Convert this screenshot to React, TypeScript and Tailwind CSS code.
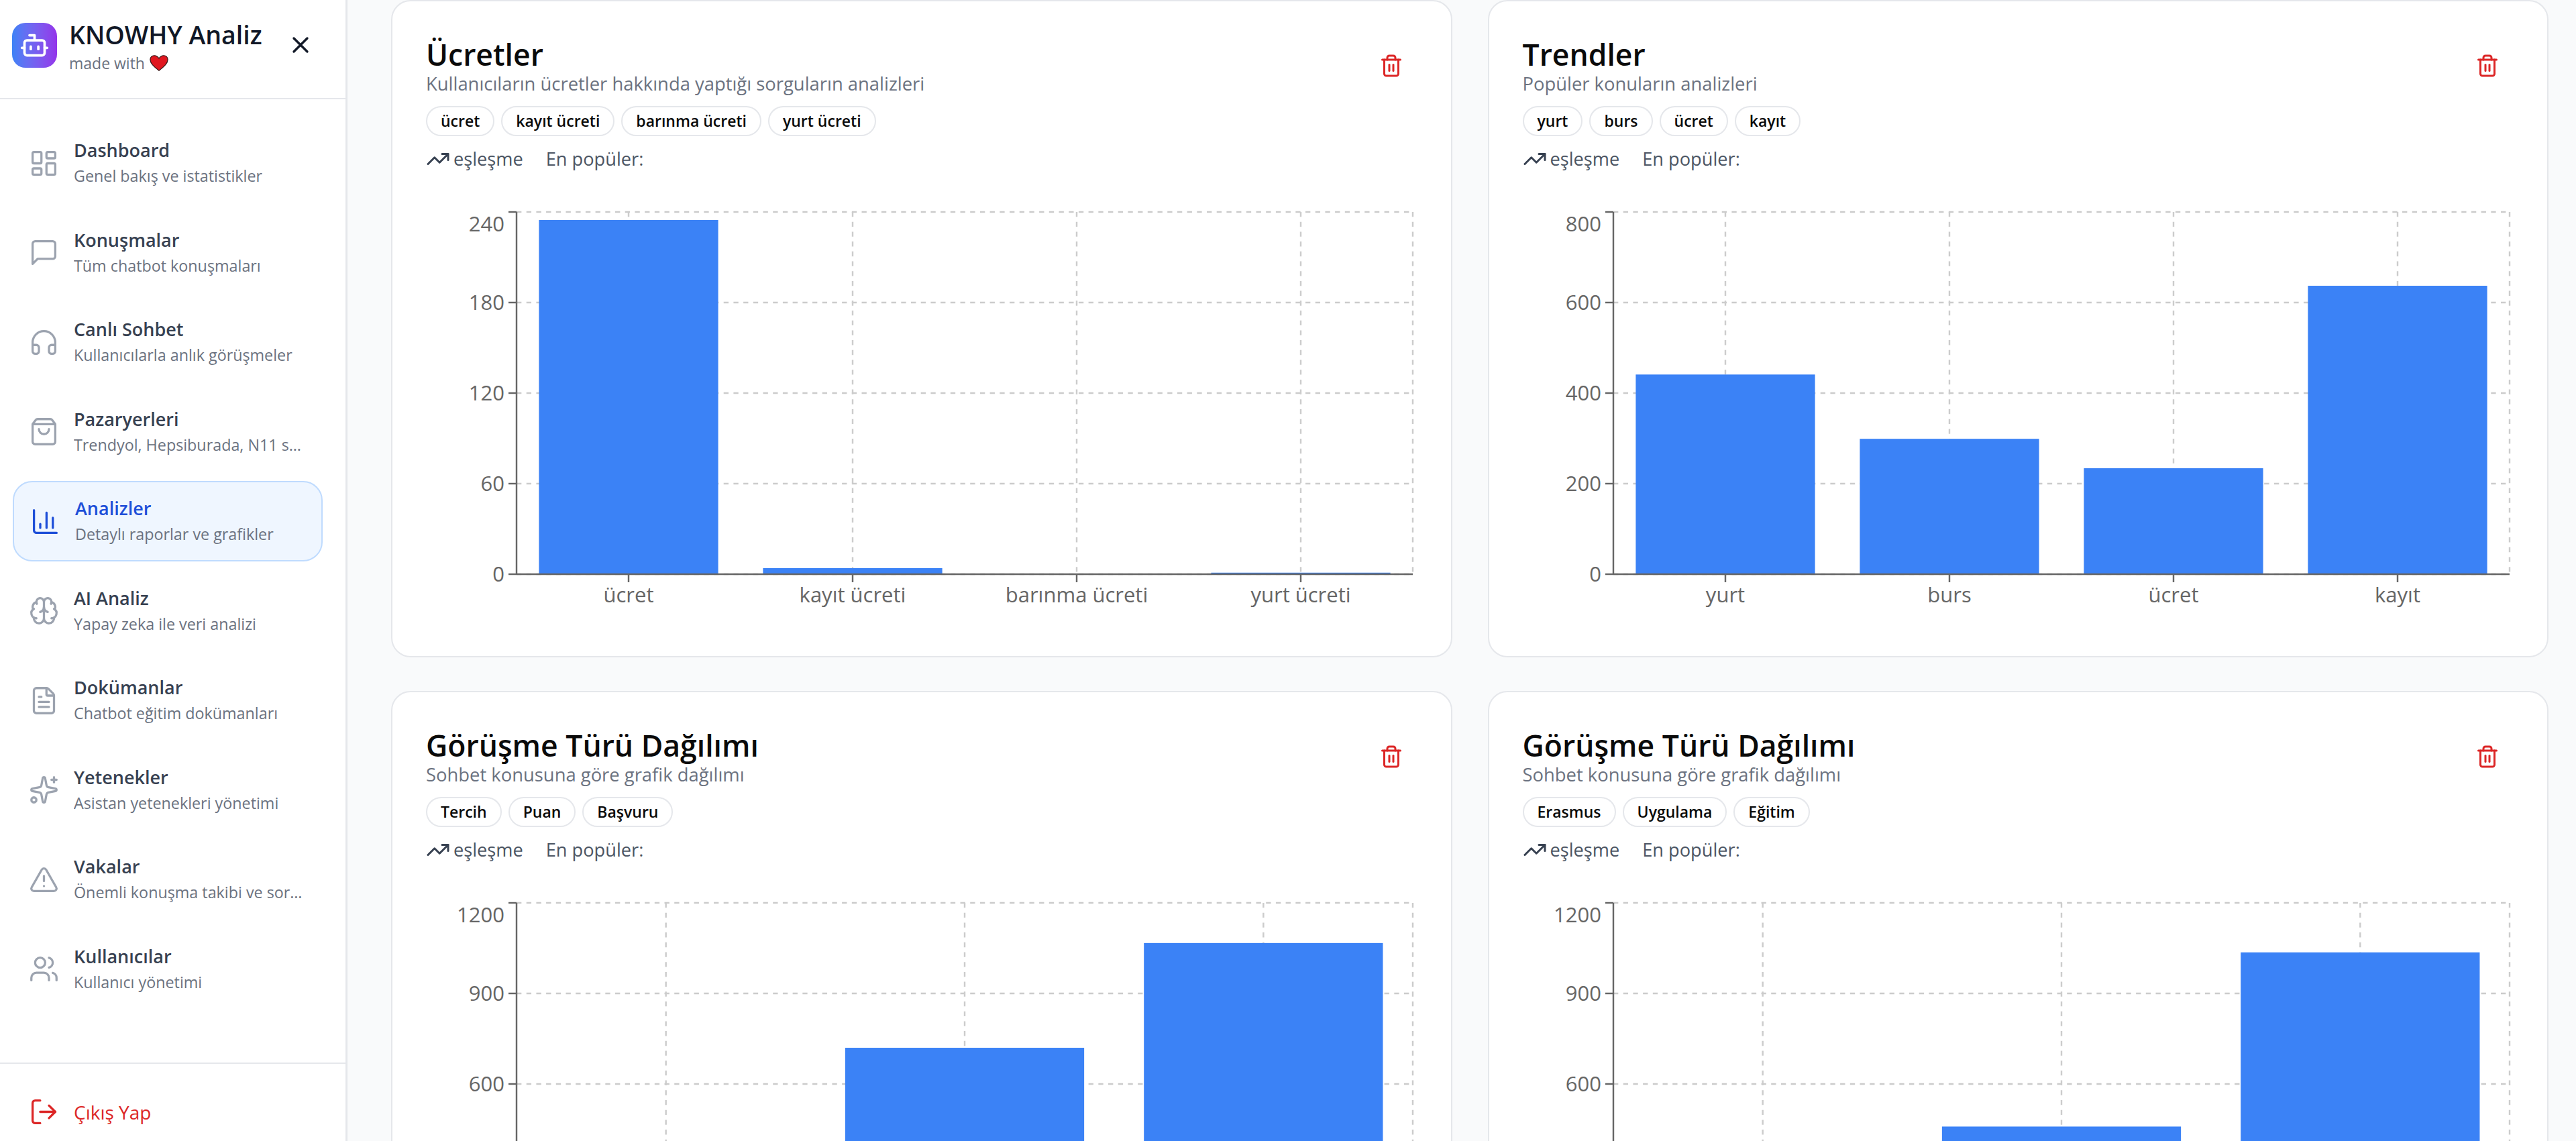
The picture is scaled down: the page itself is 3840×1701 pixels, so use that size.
import React from 'react';
import {
  LayoutDashboard, Headphones, ShoppingBag, ChartColumn, Brain, FileText,
  Sparkles, TriangleAlert, Users, LogOut, Bot, X, Trash2, TrendingUp,
} from 'lucide-react';

// lucide's current message-square is wider than the one in the picture
const MessageIcon = ({ size, strokeWidth, className }: { size: number; strokeWidth: number; className: string }) => (
  <svg
    width={size}
    height={size}
    viewBox="0 0 24 24"
    fill="none"
    stroke="currentColor"
    strokeWidth={strokeWidth}
    strokeLinecap="round"
    strokeLinejoin="round"
    className={className}
  >
    <path d="M21 15a2 2 0 0 1-2 2H7l-4 4V5a2 2 0 0 1 2-2h14a2 2 0 0 1 2 2z" />
  </svg>
);

const navItems = [
  { icon: LayoutDashboard, title: 'Dashboard', sub: 'Genel bakış ve istatistikler' },
  { icon: MessageIcon, title: 'Konuşmalar', sub: 'Tüm chatbot konuşmaları' },
  { icon: Headphones, title: 'Canlı Sohbet', sub: 'Kullanıcılarla anlık görüşmeler' },
  { icon: ShoppingBag, title: 'Pazaryerleri', sub: 'Trendyol, Hepsiburada, N11 senkronizasyonu' },
  { icon: ChartColumn, title: 'Analizler', sub: 'Detaylı raporlar ve grafikler', active: true },
  { icon: Brain, title: 'AI Analiz', sub: 'Yapay zeka ile veri analizi' },
  { icon: FileText, title: 'Dokümanlar', sub: 'Chatbot eğitim dokümanları' },
  { icon: Sparkles, title: 'Yetenekler', sub: 'Asistan yetenekleri yönetimi' },
  { icon: TriangleAlert, title: 'Vakalar', sub: 'Önemli konuşma takibi ve sorun yönetimi' },
  { icon: Users, title: 'Kullanıcılar', sub: 'Kullanıcı yönetimi' },
];

const cards = [
  {
    title: 'Ücretler',
    sub: 'Kullanıcıların ücretler hakkında yaptığı sorguların analizleri',
    max: 240,
    ticks: [0, 60, 120, 180, 240],
    data: [
      { name: 'ücret', value: 234.7 },
      { name: 'kayıt ücreti', value: 4 },
      { name: 'barınma ücreti', value: 0 },
      { name: 'yurt ücreti', value: 1 },
    ],
  },
  {
    title: 'Trendler',
    sub: 'Popüler konuların analizleri',
    max: 800,
    ticks: [0, 200, 400, 600, 800],
    data: [
      { name: 'yurt', value: 441 },
      { name: 'burs', value: 299 },
      { name: 'ücret', value: 234 },
      { name: 'kayıt', value: 637 },
    ],
  },
  {
    title: 'Görüşme Türü Dağılımı',
    sub: 'Sohbet konusuna göre grafik dağılımı',
    max: 1200,
    ticks: [0, 300, 600, 900, 1200],
    data: [
      { name: 'Tercih', value: 240 },
      { name: 'Puan', value: 720 },
      { name: 'Başvuru', value: 1067 },
    ],
  },
  {
    title: 'Görüşme Türü Dağılımı',
    sub: 'Sohbet konusuna göre grafik dağılımı',
    max: 1200,
    ticks: [0, 300, 600, 900, 1200],
    data: [
      { name: 'Erasmus', value: 240 },
      { name: 'Uygulama', value: 459 },
      { name: 'Eğitim', value: 1036 },
    ],
  },
];

const Chart = ({ data, ticks, max }: { data: { name: string; value: number }[]; ticks: number[]; max: number }) => {
  const left = 133;
  const right = 1469;
  const top = 26;
  const bottom = 566;
  const band = (right - left) / data.length;
  const yOf = (v: number) => bottom - (v / max) * (bottom - top);
  return (
    <svg width={1475} height={640} className="block">
      <g stroke="#cccccc" strokeWidth={2.45} strokeDasharray="7.35 7.35" fill="none">
        {ticks.map((t) => (
          <line key={t} x1={left} x2={right} y1={yOf(t)} y2={yOf(t)} />
        ))}
        {data.map((d, i) => (
          <line key={d.name} x1={left + band * i + band / 2} x2={left + band * i + band / 2} y1={top} y2={bottom} />
        ))}
        <line x1={right} x2={right} y1={top} y2={bottom} />
      </g>
      {data.map((d, i) => {
        const h = (d.value / max) * (bottom - top);
        return <rect key={d.name} x={left + band * i + band * 0.1} y={bottom - h} width={band * 0.8} height={h} fill="#3b82f6" />;
      })}
      <g stroke="#666666" strokeWidth={2.45}>
        <line x1={left} x2={left} y1={top} y2={bottom} />
        <line x1={left} x2={right} y1={bottom} y2={bottom} />
        {ticks.map((t) => (
          <line key={t} x1={left - 12} x2={left} y1={yOf(t)} y2={yOf(t)} />
        ))}
        {data.map((d, i) => (
          <line key={d.name} x1={left + band * i + band / 2} x2={left + band * i + band / 2} y1={bottom} y2={bottom + 12} />
        ))}
      </g>
      <g fill="#666666" fontSize={31}>
        {ticks.map((t) => (
          <text key={t} x={left - 18} y={(t === max ? yOf(t) + 18 : yOf(t)) + 11} textAnchor="end">
            {t}
          </text>
        ))}
        {data.map((d, i) => (
          <text key={d.name} x={left + band * i + band / 2} y={bottom + 42} textAnchor="middle">
            {d.name}
          </text>
        ))}
      </g>
    </svg>
  );
};

const Card = ({ card }: { card: (typeof cards)[number] }) => (
  <div className="bg-white rounded-[29px] border-[2.5px] border-[#e5e7eb] pl-[50px] pr-[53px] pt-[51px] pb-[48px]">
    <div className="flex items-start justify-between">
      <div>
        <h2 className="text-[44.5px] leading-[56px] font-semibold text-[#0a0a0a]">{card.title}</h2>
        <p className="text-[27.4px] leading-[32px] text-[#6b7280]">{card.sub}</p>
      </div>
      <button className="p-[18px] mt-[9px] text-[#dc2626]">
        <Trash2 size={36} />
      </button>
    </div>
    <div className="flex gap-[10px] mt-[17px]">
      {card.data.map((d) => (
        <span
          key={d.name}
          className="h-[45px] px-[20px] flex items-center rounded-full border-[2.5px] border-[#e5e7eb] text-[23px] font-semibold text-[#0a0a0a]"
        >
          {d.name}
        </span>
      ))}
    </div>
    <div className="flex items-center mt-[14px] text-[27.2px] leading-[40px] text-[#4b5563]">
      <TrendingUp size={36} className="text-[#374151] mr-[5px]" />
      <span>eşleşme</span>
      <span className="ml-[34px]">En popüler:</span>
    </div>
    <div className="mt-[33px] ml-[2px]">
      <Chart data={card.data} ticks={card.ticks} max={card.max} />
    </div>
  </div>
);

export default function App() {
  return (
    <div className="flex h-screen overflow-hidden bg-[#f9fafb] font-['Open_Sans',sans-serif]">
      <aside className="w-[518px] shrink-0 flex flex-col bg-white border-r-[3px] border-[#e5e7eb]">
        <div className="h-[148px] shrink-0 flex items-start pl-[18px] pt-[34px] border-b-[2.5px] border-[#e5e7eb]">
          <div className="w-[67px] h-[67px] rounded-[20px] bg-gradient-to-r from-[#3b82f6] to-[#9333ea] flex items-center justify-center text-white">
            <Bot size={45} />
          </div>
          <div className="ml-[18px] w-[317px]">
            <div className="text-[37.5px] leading-[42px] -mt-[3px] font-semibold text-[#111827] whitespace-nowrap">KNOWHY Analiz</div>
            <div className="flex items-center text-[23px] leading-[32px] mt-[5px] text-[#6b7280]">
              made with
              <svg viewBox="0 0 24 24" className="w-[30px] h-[30px] ml-[6px]">
                <path
                  d="M12 21C5 15.500 1.500 12 1.500 7.800 1.500 4.800 3.800 3 6.400 3c2.200 0 4.200 1.200 5.600 3.400C13.400 4.200 15.400 3 17.600 3c2.600 0 4.900 1.800 4.900 4.800C22.500 12 19 15.500 12 21z"
                  fill="#e0161f"
                  stroke="#3b1a1a"
                  strokeWidth={1}
                />
              </svg>
            </div>
          </div>
          <button className="ml-[8px] mt-[13px] text-[#111827]">
            <X size={40} />
          </button>
        </div>
        <nav className="flex-1 flex flex-col gap-[13.5px] pt-[35px] pl-[19px] pr-[34px]">
          {navItems.map((item) => {
            const Icon = item.icon;
            return (
              <a
                key={item.title}
                className={
                  item.active
                    ? 'h-[120px] flex items-center gap-[22px] pl-[24px] pr-[29px] rounded-[29px] bg-[#eff6ff] border-[2.5px] border-[#bfdbfe]'
                    : 'h-[120px] flex items-center gap-[22px] pl-[24px] pr-[29px] rounded-[29px]'
                }
              >
                <Icon size={45} strokeWidth={1.75} className={item.active ? 'shrink-0 text-[#1d4ed8]' : 'shrink-0 text-[#9ca3af]'} />
                <div className="min-w-0">
                  <div className={item.active ? 'text-[27px] leading-[38px] font-semibold text-[#1d4ed8]' : 'text-[27px] leading-[38px] font-semibold text-[#374151]'}>
                    {item.title}
                  </div>
                  <div className="text-[23.3px] leading-[38px] truncate text-[#6b7280]">{item.sub}</div>
                </div>
              </a>
            );
          })}
        </nav>
        <div className="h-[117px] shrink-0 border-t-[2.5px] border-[#e5e7eb] flex items-center gap-[22px] pl-[43px] pt-[28px] text-[#dc2626]">
          <LogOut size={45} strokeWidth={1.75} />
          <span className="text-[28px] font-medium">Çıkış Yap</span>
        </div>
      </aside>
      <main className="flex-1 min-w-0 overflow-hidden pl-[65px] pr-[41px]">
        <div className="grid grid-cols-2 gap-x-[53px] gap-y-[50px]">
          {cards.map((c, i) => (
            <Card key={i} card={c} />
          ))}
        </div>
      </main>
    </div>
  );
}
